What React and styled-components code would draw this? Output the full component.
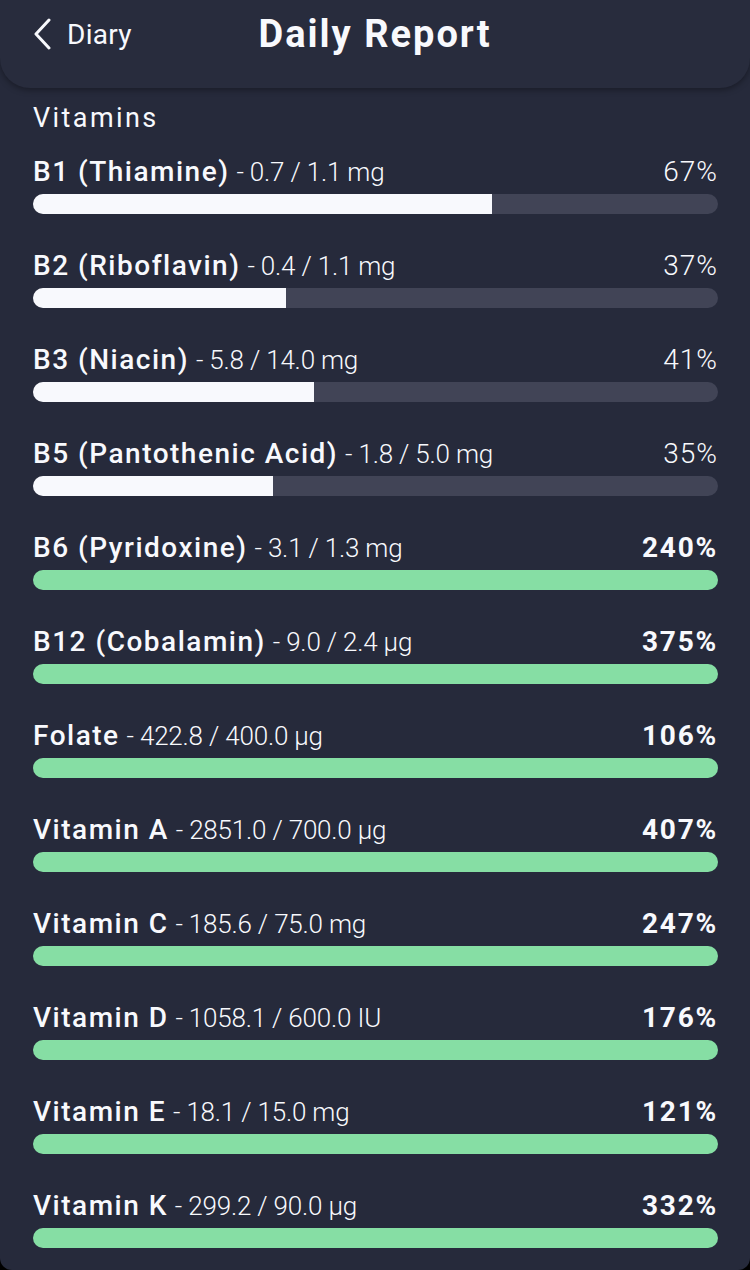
import React from "react";
import styled, { createGlobalStyle } from "styled-components";

const Global = createGlobalStyle`
  html, body { margin: 0; padding: 0; background: #000; }
  body { font-family: Roboto, "Noto Sans", sans-serif; -webkit-font-smoothing: antialiased; }
`;

const Screen = styled.div`
  width: 750px;
  height: 1270px;
  background: #262a3b;
  border-radius: 0 0 12px 12px;
  overflow: hidden;
  color: #f8f9fd;
  display: flex;
  flex-direction: column;
`;

const Header = styled.header`
  height: 88px;
  flex: 0 0 88px;
  background: #282c3d;
  border-radius: 0 0 30px 30px;
  box-shadow: 0 2px 6px rgba(0, 0, 0, 0.35);
  display: grid;
  grid-template-columns: 1fr auto 1fr;
  align-items: start;
  padding: 0 32px;
  position: relative;
  z-index: 1;
`;

const Back = styled.div`
  display: flex;
  align-items: center;
  gap: 15px;
  height: 68px;
  font-size: 28px;
  font-weight: 400;
  letter-spacing: 0.3px;
`;

const Title = styled.h1`
  margin: 0;
  height: 68px;
  line-height: 68px;
  font-size: 38px;
  font-weight: 700;
  letter-spacing: 2px;
`;

const Content = styled.main`
  padding: 15px 32px 0 33px;
  display: flex;
  flex-direction: column;
`;

const Section = styled.h2`
  margin: 0 0 24px;
  font-size: 27px;
  line-height: 30px;
  font-weight: 400;
  letter-spacing: 2.4px;
`;

const List = styled.div`
  display: flex;
  flex-direction: column;
  gap: 37px;
`;

const Row = styled.div`
  display: flex;
  flex-direction: column;
  gap: 7px;
`;

const LabelLine = styled.div`
  display: flex;
  justify-content: space-between;
  align-items: baseline;
  line-height: 30px;
  font-size: 28px;
`;

const Name = styled.span`
  font-weight: 500;
  letter-spacing: 1.5px;
`;

const Amount = styled.span`
  font-size: 26px;
  font-weight: 300;
  letter-spacing: -0.2px;
`;

const Percent = styled.span`
  font-weight: ${(p) => (p.$over ? 700 : 300)};
  letter-spacing: ${(p) => (p.$over ? "1.8px" : "1px")};
`;

const Track = styled.div`
  height: 20px;
  border-radius: 10px;
  background: #414456;
  overflow: hidden;
`;

const Fill = styled.div`
  height: 100%;
  background: ${(p) => (p.$over ? "#86dea4" : "#f8f9fd")};
`;

const items = [
  ["B1 (Thiamine)", "0.7 / 1.1 mg", 67],
  ["B2 (Riboflavin)", "0.4 / 1.1 mg", 37],
  ["B3 (Niacin)", "5.8 / 14.0 mg", 41],
  ["B5 (Pantothenic Acid)", "1.8 / 5.0 mg", 35],
  ["B6 (Pyridoxine)", "3.1 / 1.3 mg", 240],
  ["B12 (Cobalamin)", "9.0 / 2.4 µg", 375],
  ["Folate", "422.8 / 400.0 µg", 106],
  ["Vitamin A", "2851.0 / 700.0 µg", 407],
  ["Vitamin C", "185.6 / 75.0 mg", 247],
  ["Vitamin D", "1058.1 / 600.0 IU", 176],
  ["Vitamin E", "18.1 / 15.0 mg", 121],
  ["Vitamin K", "299.2 / 90.0 µg", 332],
];

export default function App() {
  return (
    <>
      <Global />
      <Screen>
        <Header>
          <Back>
            <svg width="20" height="32" viewBox="0 0 20 32" fill="none">
              <path d="M17 2 L4 16 L17 30" stroke="#f8f9fd" strokeWidth="3" strokeLinecap="round" strokeLinejoin="round" />
            </svg>
            Diary
          </Back>
          <Title>Daily Report</Title>
          <div />
        </Header>
        <Content>
          <Section>Vitamins</Section>
          <List>
            {items.map(([name, amt, pct]) => {
              const over = pct >= 100;
              return (
                <Row key={name}>
                  <LabelLine>
                    <span>
                      <Name>{name}</Name> <Amount>- {amt}</Amount>
                    </span>
                    <Percent $over={over}>{pct}%</Percent>
                  </LabelLine>
                  <Track>
                    <Fill $over={over} style={{ width: `${Math.min(pct, 100)}%` }} />
                  </Track>
                </Row>
              );
            })}
          </List>
        </Content>
      </Screen>
    </>
  );
}
